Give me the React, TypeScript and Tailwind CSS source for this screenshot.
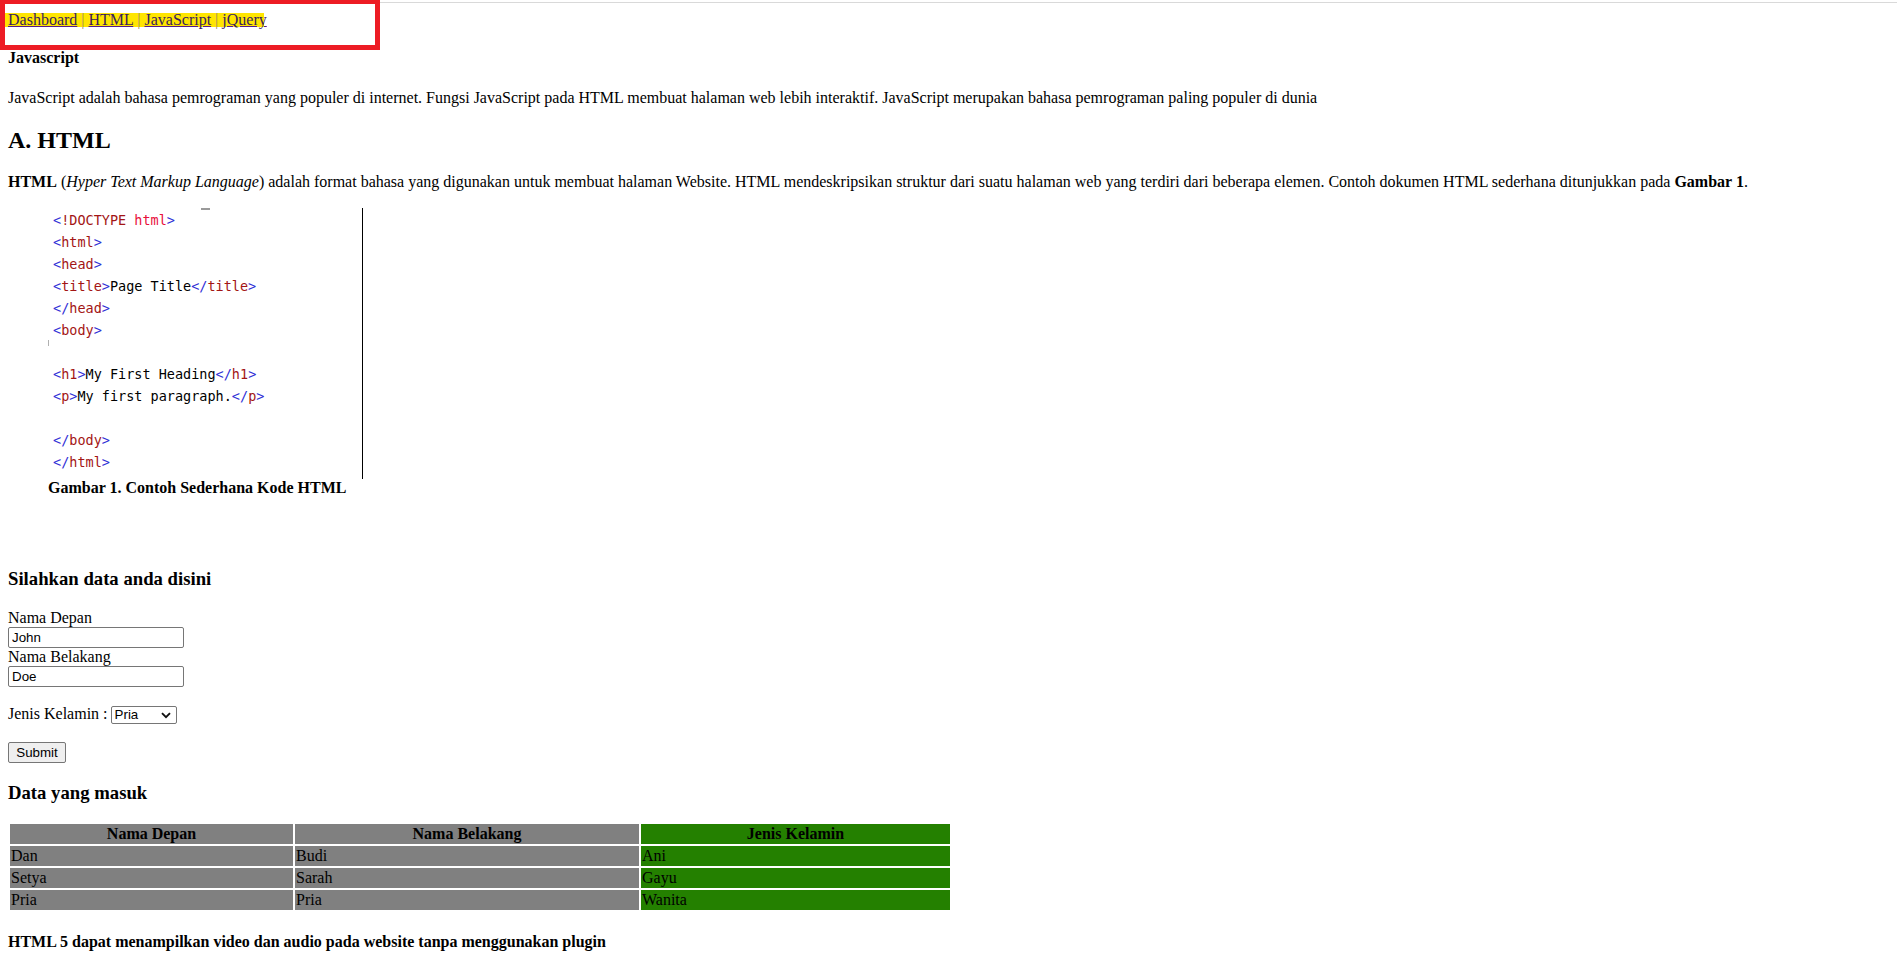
import React from "react";

const B = ({ children }: { children: React.ReactNode }) => (
  <span className="text-[#2f2fd6]">{children}</span>
);
const T = ({ children }: { children: React.ReactNode }) => (
  <span className="text-[#a31515]">{children}</span>
);

function CodeLine({ children }: { children?: React.ReactNode }) {
  return <div className="h-[22px] leading-[22px] whitespace-pre">{children}</div>;
}

const rows = [
  ["Dan", "Budi", "Ani"],
  ["Setya", "Sarah", "Gayu"],
  ["Pria", "Pria", "Wanita"],
];

export default function App() {
  return (
    <div className="relative min-h-screen bg-white text-black font-['Liberation_Serif','Times_New_Roman',serif] text-[16px] leading-[18px]">
      {/* thin rule at very top */}
      <div className="h-[2px]" />
      <div className="h-px bg-[#d9d9d9]" />

      {/* nav */}
      <div className="mt-[10px] flex">
        <div className="ml-[4px] pl-[4px] w-[260px] h-[14px] leading-[14px] bg-[#ffe500] whitespace-nowrap">
          <a href="#" className="text-[#3a1d5e] underline decoration-[#551a8b]">Dashboard</a>
          <span className="text-[#9a8a60]"> | </span>
          <a href="#" className="text-[#3a1d5e] underline decoration-[#551a8b]">HTML</a>
          <span className="text-[#9a8a60]"> | </span>
          <a href="#" className="text-[#3a1d5e] underline decoration-[#551a8b]">JavaScript</a>
          <span className="text-[#9a8a60]"> | </span>
          <a href="#" className="text-[#3a1d5e] underline decoration-[#551a8b]">jQuery</a>
        </div>
      </div>

      <h4 className="mt-[22px] ml-[8px] font-bold">Javascript</h4>
      <p className="mt-[22px] ml-[8px]">
        JavaScript adalah bahasa pemrograman yang populer di internet. Fungsi JavaScript pada HTML membuat halaman web lebih interaktif. JavaScript merupakan bahasa pemrograman paling populer di dunia
      </p>

      <h2 className="mt-[19px] ml-[8px] text-[24px] leading-[28px] font-bold">A. HTML</h2>
      <p className="mt-[19px] ml-[8px] whitespace-nowrap">
        <b>HTML</b> (<i>Hyper Text Markup Language</i>) adalah format bahasa yang digunakan untuk membuat halaman Website. HTML mendeskripsikan struktur dari suatu halaman web yang terdiri dari beberapa elemen. Contoh dokumen HTML sederhana ditunjukkan pada <b>Gambar 1</b>.
      </p>

      {/* figure */}
      <div className="mt-[17px] ml-[48px]">
        <div className="relative w-[315px] h-[271px] border-r border-black pl-[5px] pt-[1px] font-['DejaVu_Sans_Mono',monospace] text-[13.5px] text-black">
          <div className="absolute left-[153px] top-0 w-[9px] h-[2px] bg-[#9a9a9a]" />
          <div className="absolute left-0 top-[132px] w-px h-[6px] bg-[#b0b0b0]" />
          <CodeLine><B>&lt;</B><T>!DOCTYPE</T> <span className="text-[#e8103c]">html</span><B>&gt;</B></CodeLine>
          <CodeLine><B>&lt;</B><T>html</T><B>&gt;</B></CodeLine>
          <CodeLine><B>&lt;</B><T>head</T><B>&gt;</B></CodeLine>
          <CodeLine><B>&lt;</B><T>title</T><B>&gt;</B>Page Title<B>&lt;/</B><T>title</T><B>&gt;</B></CodeLine>
          <CodeLine><B>&lt;/</B><T>head</T><B>&gt;</B></CodeLine>
          <CodeLine><B>&lt;</B><T>body</T><B>&gt;</B></CodeLine>
          <CodeLine />
          <CodeLine><B>&lt;</B><T>h1</T><B>&gt;</B>My First Heading<B>&lt;/</B><T>h1</T><B>&gt;</B></CodeLine>
          <CodeLine><B>&lt;</B><T>p</T><B>&gt;</B>My first paragraph.<B>&lt;/</B><T>p</T><B>&gt;</B></CodeLine>
          <CodeLine />
          <CodeLine><B>&lt;/</B><T>body</T><B>&gt;</B></CodeLine>
          <CodeLine><B>&lt;/</B><T>html</T><B>&gt;</B></CodeLine>
        </div>
        <div className="font-bold">Gambar 1. Contoh Sederhana Kode HTML</div>
      </div>

      {/* form */}
      <h3 className="mt-[71px] ml-[8px] text-[18.72px] leading-[22px] font-bold">Silahkan data anda disini</h3>
      <div className="ml-[8px]">
        <div className="mt-[19px]">Nama Depan</div>
        <input
          defaultValue="John"
          className="block w-[176px] h-[21px] px-[3px] border border-[#767676] rounded-[2px] font-['Liberation_Sans',Arial,sans-serif] text-[13.33px] text-black"
        />
        <div>Nama Belakang</div>
        <input
          defaultValue="Doe"
          className="block w-[176px] h-[21px] px-[3px] border border-[#767676] rounded-[2px] font-['Liberation_Sans',Arial,sans-serif] text-[13.33px] text-black"
        />
        <div className="mt-[18px] flex items-start h-[19px]">
          <span>Jenis Kelamin :</span>
          <div className="relative ml-[3px] mt-[1px]">
            <select
              defaultValue="Pria"
              className="appearance-none block w-[66px] h-[18px] pl-[3px] border border-[#767676] rounded-[2px] bg-white font-['Liberation_Sans',Arial,sans-serif] text-[13.33px] leading-[16px] text-black"
            >
              <option>Pria</option>
              <option>Wanita</option>
            </select>
            <svg className="absolute right-[6px] top-[6px] w-[10px] h-[7px] pointer-events-none" viewBox="0 0 10 7">
              <path d="M1 1.2 L5 5.2 L9 1.2" fill="none" stroke="#111" strokeWidth="1.9" />
            </svg>
          </div>
        </div>
        <button className="mt-[18px] block w-[58px] h-[21px] bg-[#efefef] border border-[#767676] rounded-[2px] font-['Liberation_Sans',Arial,sans-serif] text-[13.33px] text-black">
          Submit
        </button>
      </div>

      {/* table */}
      <h3 className="mt-[19px] ml-[8px] text-[18.72px] leading-[22px] font-bold">Data yang masuk</h3>
      <table className="mt-[18px] ml-[8px] w-[944px] table-fixed border-separate border-spacing-[2px]">
        <thead>
          <tr>
            <th className="w-[283px] bg-[#808080] py-[1px] px-[1px] leading-[18px] font-bold text-center">Nama Depan</th>
            <th className="w-[344px] bg-[#808080] py-[1px] px-[1px] leading-[18px] font-bold text-center">Nama Belakang</th>
            <th className="w-[309px] bg-[#248000] py-[1px] px-[1px] leading-[18px] font-bold text-center">Jenis Kelamin</th>
          </tr>
        </thead>
        <tbody>
          {rows.map((r, i) => (
            <tr key={i}>
              <td className="bg-[#808080] p-[1px] leading-[18px]">{r[0]}</td>
              <td className="bg-[#808080] p-[1px] leading-[18px]">{r[1]}</td>
              <td className="bg-[#248000] p-[1px] leading-[18px]">{r[2]}</td>
            </tr>
          ))}
        </tbody>
      </table>

      <h4 className="mt-[21px] ml-[8px] font-bold">HTML 5 dapat menampilkan video dan audio pada website tanpa menggunakan plugin</h4>

      {/* red annotation box */}
      <div className="absolute left-0 top-0 w-[380px] h-[50px] border-[5px] border-t-4 border-[#ed1c24] pointer-events-none" />
    </div>
  );
}
